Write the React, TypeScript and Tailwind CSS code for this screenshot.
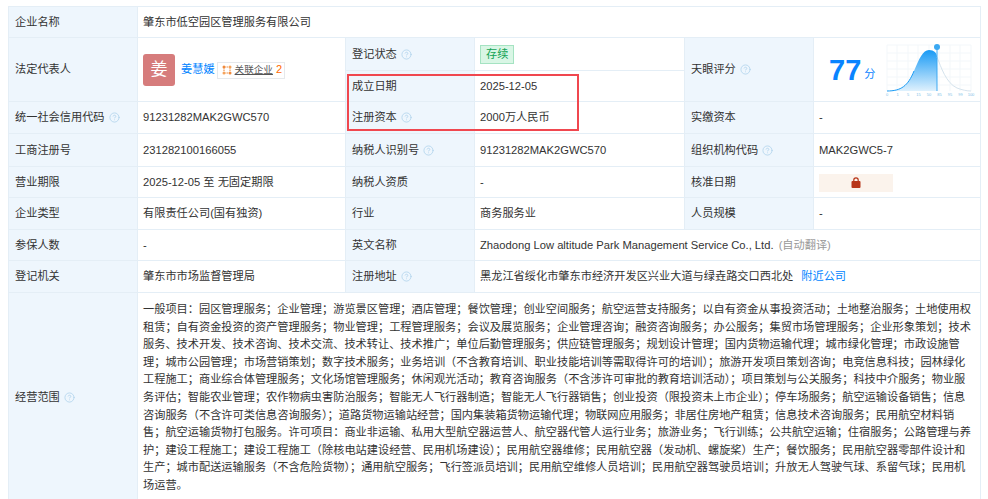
import React from "react";
import { CircleHelp } from "lucide-react";

// scope text is typed with ascii punctuation, the source shows full width forms
const scope =
  "一般项目:园区管理服务;企业管理;游览景区管理;酒店管理;餐饮管理;创业空间服务;航空运营支持服务;以自有资金从事投资活动;土地整治服务;土地使用权租赁;自有资金投资的资产管理服务;物业管理;工程管理服务;会议及展览服务;企业管理咨询;融资咨询服务;办公服务;集贸市场管理服务;企业形象策划;技术服务、技术开发、技术咨询、技术交流、技术转让、技术推广;单位后勤管理服务;供应链管理服务;规划设计管理;国内货物运输代理;城市绿化管理;市政设施管理;城市公园管理;市场营销策划;数字技术服务;业务培训(不含教育培训、职业技能培训等需取得许可的培训);旅游开发项目策划咨询;电竞信息科技;园林绿化工程施工;商业综合体管理服务;文化场馆管理服务;休闲观光活动;教育咨询服务(不含涉许可审批的教育培训活动);项目策划与公关服务;科技中介服务;物业服务评估;智能农业管理;农作物病虫害防治服务;智能无人飞行器制造;智能无人飞行器销售;创业投资(限投资未上市企业);停车场服务;航空运输设备销售;信息咨询服务(不含许可类信息咨询服务);道路货物运输站经营;国内集装箱货物运输代理;物联网应用服务;非居住房地产租赁;信息技术咨询服务;民用航空材料销售;航空运输货物打包服务。许可项目:商业非运输、私用大型航空器运营人、航空器代管人运行业务;旅游业务;飞行训练;公共航空运输;住宿服务;公路管理与养护;建设工程施工;建设工程施工(除核电站建设经营、民用机场建设);民用航空器维修;民用航空器(发动机、螺旋桨)生产;餐饮服务;民用航空器零部件设计和生产;城市配送运输服务(不含危险货物);通用航空服务;飞行签派员培训;民用航空维修人员培训;民用航空器驾驶员培训;升放无人驾驶气球、系留气球;民用机场运营。"
    .replace(/:/g, "\uFF1A")
    .replace(/;/g, "\uFF1B")
    .replace(/\(/g, "\uFF08")
    .replace(/\)/g, "\uFF09");

const Help = () => (
  <CircleHelp size={11} strokeWidth={1.7} className="inline-block ml-[4px] text-[#aed2ec] align-[-2px]" />
);

const Label = ({ text, help, rowSpan }: { text: string; help?: boolean; rowSpan?: number }) => (
  <td rowSpan={rowSpan} className="bg-[#eef6fd] border border-[#e4eef6] pl-[6px] pr-1 pt-[1px]">
    {text}
    {help && <Help />}
  </td>
);

const Value = ({ children, colSpan, rowSpan }: { children: React.ReactNode; colSpan?: number; rowSpan?: number }) => (
  <td colSpan={colSpan} rowSpan={rowSpan} className="border border-[#e4eef6] px-[5px] pt-[1px]">
    {children}
  </td>
);

const ScoreChart = () => {
  const ticks = ["0", "1", "5", "15", "50", "85", "95", "99", "100"];
  return (
    <svg width="95" height="58" viewBox="880 40 95 58">
      <defs>
        <linearGradient id="fill" x1="0" y1="0" x2="0" y2="1">
          <stop offset="0" stopColor="#189af5" />
          <stop offset="1" stopColor="#dff1fd" />
        </linearGradient>
      </defs>
      {[885, 895, 906, 916, 927, 937, 948, 958, 969].map((x) => (
        <line key={x} x1={x} x2={x} y1="44" y2="90" stroke="#f3f7fa" strokeWidth="1" />
      ))}
      {[44, 52, 60, 68, 76, 84].map((y) => (
        <line key={y} x1="885" x2="969" y1={y} y2={y} stroke="#f3f7fa" strokeWidth="1" />
      ))}
      <path d="M885 90 C899 90 906 85 912 70 C917 58 921 49 927 49 C932 49 935 52 935 56 L935 90 Z" fill="url(#fill)" />
      <path d="M885 90 C899 90 906 85 912 70" fill="none" stroke="#1b9cf5" strokeWidth="1" />
      <path d="M935 56 C939 66 944 82 955 87 C960 89 965 90 969 90" fill="none" stroke="#d5e3ed" strokeWidth="1" />
      <line x1="935" x2="935" y1="47" y2="90" stroke="#3aa8f2" strokeWidth="1" />
      <circle cx="935" cy="46" r="3" fill="#3aa8f2" />
      {ticks.map((t, i) => (
        <text key={t} x={885 + i * 10.5} y="95" fontSize="4" textAnchor="middle" fill="#7fbfe8">
          {t}
        </text>
      ))}
    </svg>
  );
};

export default function App() {
  return (
    <div className="relative h-[499px] w-[988px] overflow-hidden bg-white pl-2 pt-[6px] text-[11.2px] leading-[17.6px] text-[#333] [font-family:'Liberation_Sans','Noto_Sans_CJK_SC',sans-serif]">
      <table className="w-[972px] table-fixed border-collapse">
        <colgroup>
          <col className="w-[129px]" />
          <col className="w-[208px]" />
          <col className="w-[129px]" />
          <col className="w-[210px]" />
          <col className="w-[129px]" />
          <col className="w-[167px]" />
        </colgroup>
        <tbody>
          <tr className="h-[31px]">
            <Label text="企业名称" />
            <Value colSpan={5}>肇东市低空园区管理服务有限公司</Value>
          </tr>
          <tr className="h-[33px]">
            <Label text="法定代表人" rowSpan={2} />
            <Value rowSpan={2}>
              <div className="flex items-center">
                <div className="flex h-8 w-8 items-center justify-center rounded-[3px] bg-[#d67c7c] text-[17px] text-white">姜</div>
                <a className="ml-[6px] text-[#0084ff]">姜慧媛</a>
                <span className="ml-[2px] flex h-[17px] w-[68px] items-center whitespace-nowrap border border-[#e6e9ec] pl-1 text-[9.6px] text-[#555]">
                  <svg width="10" height="10" viewBox="0 0 10 10" className="mr-[3px] shrink-0">
                    <g fill="none" stroke="#f08a3c" strokeWidth="1.1">
                      <path d="M2 2 L8 2 M2 8 L8 8 M2 2 L2 8 M8 2 L8 8" strokeDasharray="1.5 1" />
                    </g>
                    <circle cx="2" cy="2" r="1.5" fill="#f08a3c" />
                    <circle cx="8" cy="2" r="1.5" fill="#f5a35c" />
                    <circle cx="2" cy="8" r="1.5" fill="#f5a35c" />
                    <circle cx="8" cy="8" r="1.5" fill="#f08a3c" />
                  </svg>
                  <span className="underline">关联企业</span>
                  <span className="ml-[3px] text-[11px] text-[#ff6a00]">2</span>
                </span>
              </div>
            </Value>
            <Label text="登记状态" help />
            <Value>
              <span className="inline-block border border-[#a5e3c2] bg-[#d9f6e5] px-[5px] text-[#13a355]">存续</span>
            </Value>
            <Label text="天眼评分" help rowSpan={2} />
            <td rowSpan={2} className="border border-[#e4eef6] pl-[15px]">
              <div className="flex items-center">
                <span className="text-[29px] leading-8 font-bold text-[#0a84ff]">77</span>
                <span className="ml-[3px] mt-[10px] text-[#0a84ff]">分</span>
                <div className="ml-[7px]">
                  <ScoreChart />
                </div>
              </div>
            </td>
          </tr>
          <tr className="h-[31px]">
            <Label text="成立日期" />
            <Value>2025-12-05</Value>
          </tr>
          <tr className="h-[32px]">
            <Label text="统一社会信用代码" help />
            <Value>91231282MAK2GWC570</Value>
            <Label text="注册资本" help />
            <Value>2000万人民币</Value>
            <Label text="实缴资本" />
            <Value>-</Value>
          </tr>
          <tr className="h-[33px]">
            <Label text="工商注册号" />
            <Value>231282100166055</Value>
            <Label text="纳税人识别号" help />
            <Value>91231282MAK2GWC570</Value>
            <Label text="组织机构代码" help />
            <Value>MAK2GWC5-7</Value>
          </tr>
          <tr className="h-[31px]">
            <Label text="营业期限" />
            <Value>2025-12-05 至 无固定期限</Value>
            <Label text="纳税人资质" />
            <Value>-</Value>
            <Label text="核准日期" />
            <Value>
              <div className="flex h-[18px] w-[74px] items-center justify-center bg-[#fbf3ec]">
                <svg width="10" height="11" viewBox="0 0 10 11">
                  <path d="M2.8 4.5 V3 a2.2 2.2 0 0 1 4.4 0 V4.5" fill="none" stroke="#b8361a" strokeWidth="1.2" />
                  <rect x="0.5" y="4" width="9" height="7" rx="1" fill="#b8361a" />
                </svg>
              </div>
            </Value>
          </tr>
          <tr className="h-[32px]">
            <Label text="企业类型" />
            <Value>有限责任公司(国有独资)</Value>
            <Label text="行业" />
            <Value>商务服务业</Value>
            <Label text="人员规模" />
            <Value>-</Value>
          </tr>
          <tr className="h-[31px]">
            <Label text="参保人数" />
            <Value>-</Value>
            <Label text="英文名称" />
            <Value colSpan={3}>
              Zhaodong Low altitude Park Management Service Co., Ltd. <span className="ml-[2px] text-[#999]">(自动翻译)</span>
            </Value>
          </tr>
          <tr className="h-[32px]">
            <Label text="登记机关" />
            <Value>肇东市市场监督管理局</Value>
            <Label text="注册地址" help />
            <Value colSpan={3}>
              黑龙江省绥化市肇东市经济开发区兴业大道与绿垚路交口西北处<a className="ml-2 text-[#0084ff]">附近公司</a>
            </Value>
          </tr>
          <tr>
            <Label text="经营范围" help />
            <td colSpan={5} className="border border-[#e4eef6] px-[5px] pt-[8px] pb-[7px]">
              {scope}
            </td>
          </tr>
        </tbody>
      </table>
      <div className="absolute left-[347px] top-[74px] h-[57px] w-[232px] border-2 border-[#f0474f]" />
    </div>
  );
}
